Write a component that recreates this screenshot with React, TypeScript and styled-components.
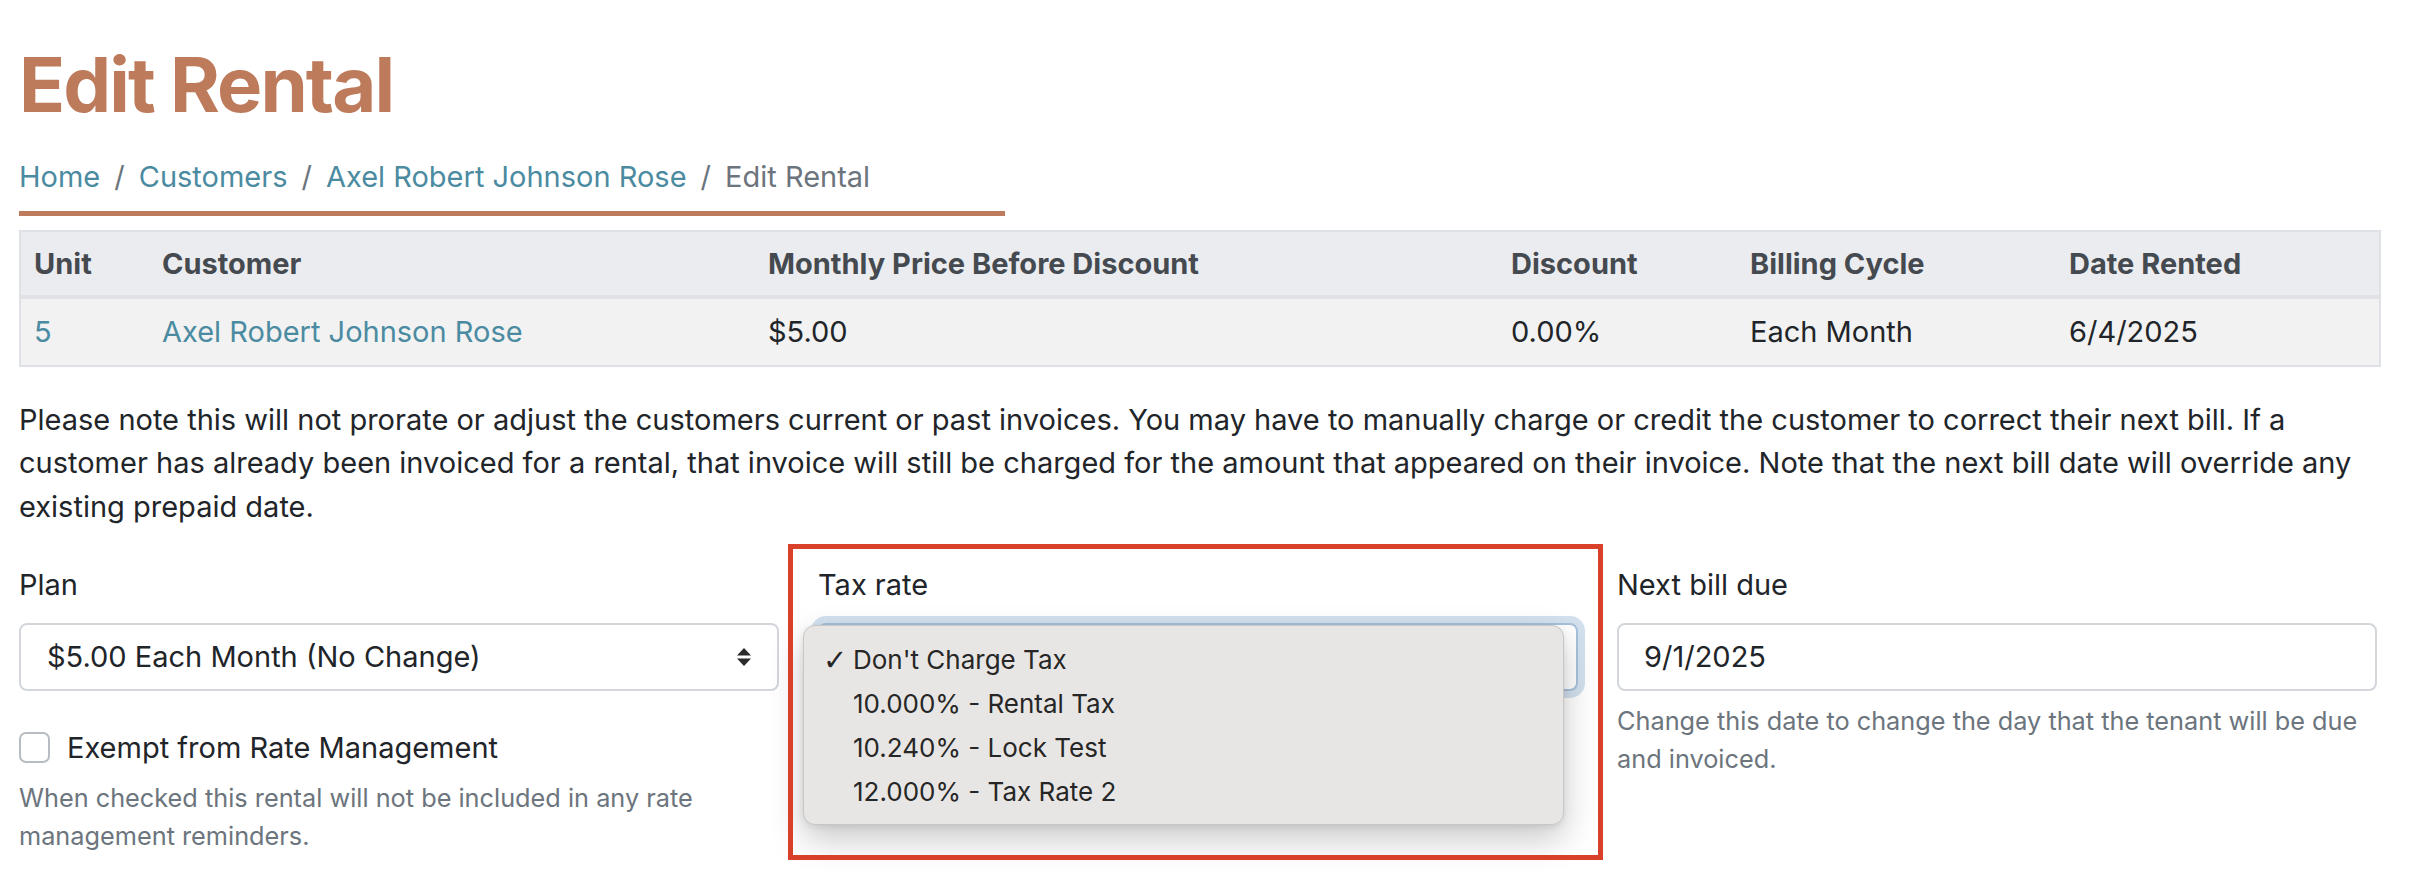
import styled, { createGlobalStyle } from 'styled-components';

const GlobalStyle = createGlobalStyle`
  html, body {
    margin: 0;
    padding: 0;
    background: #ffffff;
  }
  body {
    font-family: Inter, 'Noto Sans', sans-serif;
    color: #212529;
    font-size: 29px;
    line-height: 1.5;
  }
  * { box-sizing: border-box; }
`;

const Page = styled.div`
  padding: 39px 53px 40px 19px;
`;

const Title = styled.h1`
  margin: 0;
  font-size: 76px;
  line-height: 91px;
  font-weight: 700;
  letter-spacing: -0.025em;
  color: #bd7b5b;
`;

const Breadcrumb = styled.nav`
  width: 986px;
  margin-top: 25px;
  padding-bottom: 12px;
  border-bottom: 5px solid #bd7b5b;
  display: flex;
  align-items: center;
  line-height: 43.5px;
`;

const Crumb = styled.a<{ $active?: boolean }>`
  color: ${p => (p.$active ? '#6c757d' : '#4b8ba1')};
  text-decoration: none;
`;

const Sep = styled.span`
  color: #6c757d;
  padding: 0 14px;
`;

const Table = styled.table`
  margin-top: 14px;
  width: 2360px;
  border-collapse: collapse;
  table-layout: fixed;
  border: 2px solid #dee2e6;
`;

const HeadRow = styled.tr`
  background: #ebecef;
  border-bottom: 4px solid #e0e2e5;
`;

const BodyRow = styled.tr`
  background: #f2f2f2;
`;

const Th = styled.th`
  text-align: left;
  font-weight: 700;
  color: #454a50;
  padding: 10px 13px;
  line-height: 43.5px;
`;

const Td = styled.td`
  padding: 11px 13px;
  line-height: 43.5px;
`;

const CellLink = styled.a`
  color: #4b8ba1;
  text-decoration: none;
`;

const Note = styled.p`
  margin: 31px 0 35px;
  line-height: 43.5px;
`;

const FormGrid = styled.div`
  display: grid;
  grid-template-columns: repeat(3, 760px);
  column-gap: 39px;
  align-items: start;
`;

const Field = styled.div<{ $marked?: boolean }>`
  position: relative;
  ${p =>
    p.$marked &&
    `
    &::after {
      content: '';
      position: absolute;
      left: -30px;
      right: -25px;
      top: -19px;
      height: 306px;
      border: 5px solid #d9402a;
      pointer-events: none;
      z-index: 3;
    }
  `}
`;

const Label = styled.label`
  display: block;
  line-height: 43.5px;
  margin-bottom: 16px;
`;

const SelectBox = styled.div<{ $focused?: boolean }>`
  position: relative;
  height: 68px;
  display: flex;
  align-items: center;
  justify-content: space-between;
  padding: 0 24px 0 26px;
  border: 2px solid ${p => (p.$focused ? '#a7c1dc' : '#d3d7db')};
  border-radius: 8px;
  background: #fff;
  color: #212529;
  box-shadow: ${p => (p.$focused ? '0 0 0 7px #d3e1ee' : 'none')};
`;

// value that sits under the open menu
const SelectValue = styled.span<{ $covered?: boolean }>`
  visibility: ${p => (p.$covered ? 'hidden' : 'visible')};
`;

const InputBox = styled.div`
  height: 68px;
  display: flex;
  align-items: center;
  padding: 0 25px;
  border: 2px solid #d3d7db;
  border-radius: 8px;
  background: #fff;
  color: #212529;
`;

const CheckRow = styled.div`
  margin-top: 35px;
  display: flex;
  align-items: center;
  line-height: 43.5px;
`;

const CheckBox = styled.span`
  width: 31px;
  height: 31px;
  border: 2px solid #b8bdc3;
  border-radius: 7px;
  background: #fff;
  margin-right: 17px;
  flex-shrink: 0;
`;

const Help = styled.div<{ $gap: number }>`
  margin-top: ${p => p.$gap}px;
  font-size: 25.3px;
  line-height: 38px;
  color: #6c757d;
`;

const Menu = styled.ul`
  position: absolute;
  left: -15px;
  top: 62px;
  width: 761px;
  margin: 0;
  padding: 12px 0 10px;
  list-style: none;
  background: #e8e6e4;
  border: 1px solid #c9c7c5;
  border-radius: 12px;
  box-shadow: 0 14px 34px rgba(0, 0, 0, 0.22), 0 2px 6px rgba(0, 0, 0, 0.08);
  z-index: 2;
`;

const MenuItem = styled.li`
  position: relative;
  height: 44px;
  line-height: 44px;
  padding-left: 49px;
  font-size: 26px;
  color: #262626;
`;

const Tick = styled.span`
  position: absolute;
  left: 19px;
  top: 0;
  font-family: 'DejaVu Sans', sans-serif;
  font-size: 29px;
  font-weight: 700;
`;

const SelectArrows = () => (
  <svg width="18" height="22" viewBox="0 0 18 22" aria-hidden="true">
    <path d="M9 2 L16 9.5 H2 Z" fill="#2b2b2b" />
    <path d="M9 20 L16 12.5 H2 Z" fill="#2b2b2b" />
  </svg>
);

const taxOptions = [
  { label: "Don't Charge Tax", selected: true },
  { label: '10.000% - Rental Tax' },
  { label: '10.240% - Lock Test' },
  { label: '12.000% - Tax Rate 2' },
];

const columns = [
  { title: 'Unit', width: 129 },
  { title: 'Customer', width: 606 },
  { title: 'Monthly Price Before Discount', width: 743 },
  { title: 'Discount', width: 239 },
  { title: 'Billing Cycle', width: 319 },
  { title: 'Date Rented', width: 324 },
];

export default function App() {
  return (
    <Page>
      <GlobalStyle />
      <Title>Edit Rental</Title>

      <Breadcrumb>
        <Crumb href="#">Home</Crumb>
        <Sep>/</Sep>
        <Crumb href="#">Customers</Crumb>
        <Sep>/</Sep>
        <Crumb href="#">Axel Robert Johnson Rose</Crumb>
        <Sep>/</Sep>
        <Crumb $active>Edit Rental</Crumb>
      </Breadcrumb>

      <Table>
        <colgroup>
          {columns.map(c => (
            <col key={c.title} style={{ width: c.width }} />
          ))}
        </colgroup>
        <thead>
          <HeadRow>
            {columns.map(c => (
              <Th key={c.title}>{c.title}</Th>
            ))}
          </HeadRow>
        </thead>
        <tbody>
          <BodyRow>
            <Td><CellLink href="#">5</CellLink></Td>
            <Td><CellLink href="#">Axel Robert Johnson Rose</CellLink></Td>
            <Td>$5.00</Td>
            <Td>0.00%</Td>
            <Td>Each Month</Td>
            <Td>6/4/2025</Td>
          </BodyRow>
        </tbody>
      </Table>

      <Note>
        Please note this will not prorate or adjust the customers current or past invoices. You may have to
        manually charge or credit the customer to correct their next bill. If a customer has already been
        invoiced for a rental, that invoice will still be charged for the amount that appeared on their
        invoice. Note that the next bill date will override any existing prepaid date.
      </Note>

      <FormGrid>
        <Field>
          <Label>Plan</Label>
          <SelectBox>
            <SelectValue>$5.00 Each Month (No Change)</SelectValue>
            <SelectArrows />
          </SelectBox>
          <CheckRow>
            <CheckBox />
            <span>Exempt from Rate Management</span>
          </CheckRow>
          <Help $gap={10}>
            When checked this rental will not be included in any rate management reminders.
          </Help>
        </Field>

        <Field $marked>
          <Label>Tax rate</Label>
          <SelectBox $focused>
            <SelectValue $covered>Don't Charge Tax</SelectValue>
            <SelectArrows />
          </SelectBox>
          <Menu>
            {taxOptions.map(o => (
              <MenuItem key={o.label}>
                {o.selected && <Tick>✓</Tick>}
                {o.label}
              </MenuItem>
            ))}
          </Menu>
        </Field>

        <Field>
          <Label>Next bill due</Label>
          <InputBox>9/1/2025</InputBox>
          <Help $gap={11}>
            Change this date to change the day that the tenant will be due and invoiced.
          </Help>
        </Field>
      </FormGrid>
    </Page>
  );
}
